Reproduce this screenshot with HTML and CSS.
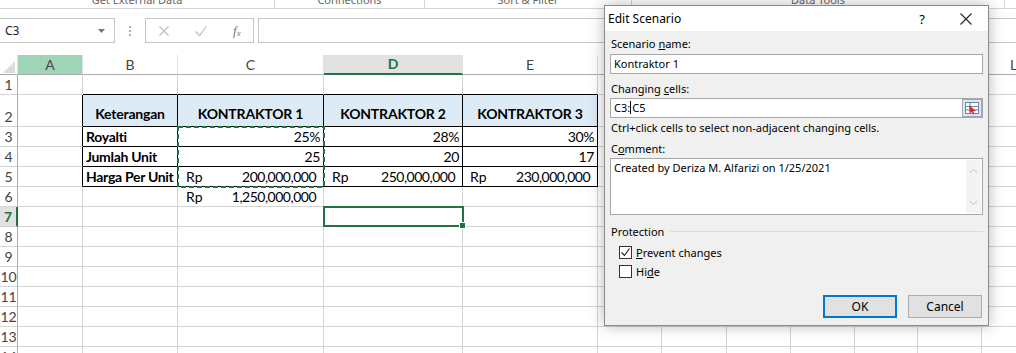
FILE: index.html
```html
<!DOCTYPE html>
<html>
<head>
<meta charset="utf-8">
<link rel="stylesheet" href="styles.css">
</head>
<body>
<div class="app">
  <div class="ribbon-groups">
    <div class="grp g1"><span>Get External Data</span></div>
    <div class="grp g2"><span>Connections</span></div>
    <div class="grp g3"><span>Sort &amp; Filter</span></div>
    <div class="grp g4"><span>Data Tools</span></div>
  </div>
  <div class="formula-bar">
    <div class="name-box"><span>C3</span><svg class="nb-arrow" width="7" height="4" viewBox="0 0 7 4"><path d="M0 0h7L3.5 4z" fill="#777"/></svg></div>
    <div class="fb-dots"><i></i><i></i><i></i></div>
    <div class="fx-box">
      <svg width="12" height="12" viewBox="0 0 12 12"><path d="M1.5 1.5l9 9M10.5 1.5l-9 9" stroke="#bdbdbd" stroke-width="1.2" fill="none"/></svg>
      <svg width="14" height="12" viewBox="0 0 14 12"><path d="M1.5 6.5l4 4L12.5 1.5" stroke="#bdbdbd" stroke-width="1.2" fill="none"/></svg>
      <span class="fx">f<sub>x</sub></span>
    </div>
    <div class="fb-input"></div>
  </div>
  <div class="sheet">
    <table class="grid">
      <colgroup>
        <col class="c-hdr"><col class="c-a"><col class="c-b"><col class="c-c"><col class="c-d"><col class="c-e"><col class="c-64"><col class="c-65"><col class="c-64"><col class="c-64"><col class="c-63"><col class="c-64"><col class="c-64">
      </colgroup>
      <tr class="r-hdr">
        <td class="corner"><svg width="12" height="12" viewBox="0 0 12 12"><path d="M12 0v12H0z" fill="#dcdcdc"/></svg></td>
        <td class="ch ch-a">A</td><td class="ch">B</td><td class="ch">C</td><td class="ch ch-sel">D</td><td class="ch">E</td><td class="ch"></td><td class="ch"></td><td class="ch"></td><td class="ch"></td><td class="ch"></td><td class="ch"></td><td class="ch">L</td>
      </tr>
      <tr>
        <td class="rh">1</td><td></td><td class="bb"></td><td class="bb"></td><td class="bb"></td><td class="bb"></td><td></td><td></td><td></td><td></td><td></td><td></td><td></td>
      </tr>
      <tr class="r-tall">
        <td class="rh">2</td><td class="br"></td>
        <td class="th bk">Keterangan</td><td class="th bk">KONTRAKTOR 1</td><td class="th bk">KONTRAKTOR 2</td><td class="th bk">KONTRAKTOR 3</td>
        <td></td><td></td><td></td><td></td><td></td><td></td><td></td>
      </tr>
      <tr>
        <td class="rh">3</td><td class="br"></td>
        <td class="lbl bk">Royalti</td><td class="num bk">25%</td><td class="num bk">28%</td><td class="num bk">30%</td>
        <td></td><td></td><td></td><td></td><td></td><td></td><td></td>
      </tr>
      <tr>
        <td class="rh">4</td><td class="br"></td>
        <td class="lbl bk">Jumlah Unit</td><td class="num bk">25</td><td class="num bk">20</td><td class="num bk">17</td>
        <td></td><td></td><td></td><td></td><td></td><td></td><td></td>
      </tr>
      <tr>
        <td class="rh">5</td><td class="br"></td>
        <td class="lbl bk">Harga Per Unit</td>
        <td class="bk"><div class="acct"><span>Rp</span><span class="digits">200,000,000</span></div></td>
        <td class="bk"><div class="acct"><span>Rp</span><span class="digits">250,000,000</span></div></td>
        <td class="bk"><div class="acct acct-e"><span>Rp</span><span class="digits">230,000,000</span></div></td>
        <td></td><td></td><td></td><td></td><td></td><td></td><td></td>
      </tr>
      <tr>
        <td class="rh">6</td><td></td><td></td>
        <td><div class="acct"><span>Rp</span><span class="digits">1,250,000,000</span></div></td>
        <td></td><td></td><td></td><td></td><td></td><td></td><td></td><td></td><td></td>
      </tr>
      <tr>
        <td class="rh rh-sel">7</td><td></td><td></td><td></td><td></td><td></td><td></td><td></td><td></td><td></td><td></td><td></td><td></td>
      </tr>
      <tr><td class="rh">8</td><td></td><td></td><td></td><td></td><td></td><td></td><td></td><td></td><td></td><td></td><td></td><td></td></tr>
      <tr><td class="rh">9</td><td></td><td></td><td></td><td></td><td></td><td></td><td></td><td></td><td></td><td></td><td></td><td></td></tr>
      <tr><td class="rh">10</td><td></td><td></td><td></td><td></td><td></td><td></td><td></td><td></td><td></td><td></td><td></td><td></td></tr>
      <tr><td class="rh">11</td><td></td><td></td><td></td><td></td><td></td><td></td><td></td><td></td><td></td><td></td><td></td><td></td></tr>
      <tr><td class="rh">12</td><td></td><td></td><td></td><td></td><td></td><td></td><td></td><td></td><td></td><td></td><td></td><td></td></tr>
      <tr><td class="rh">13</td><td></td><td></td><td></td><td></td><td></td><td></td><td></td><td></td><td></td><td></td><td></td><td></td></tr>
      <tr><td class="rh">14</td><td></td><td></td><td></td><td></td><td></td><td></td><td></td><td></td><td></td><td></td><td></td><td></td></tr>
    </table>
    <svg class="ants" width="148" height="62" viewBox="0 0 148 62"><rect x="1" y="1" width="146" height="60" fill="none" stroke="#217346" stroke-width="2" stroke-dasharray="5 3"/></svg>
    <div class="active-cell"><i class="handle"></i></div>
  </div>

  <div class="dialog">
    <div class="dlg-title">
      <span class="dlg-name">Edit Scenario</span>
      <span class="dlg-help">?</span>
      <svg class="dlg-close" width="12" height="12" viewBox="0 0 12 12"><path d="M0.5 0.5l11 11M11.5 0.5l-11 11" stroke="#222" stroke-width="1.1" fill="none"/></svg>
    </div>
    <div class="dlg-body">
      <div class="f-label l1">Scenario <u>n</u>ame:</div>
      <div class="f-input">Kontraktor 1</div>
      <div class="f-label l2">Changing <u>c</u>ells:</div>
      <div class="f-input ref-input"><span>C3:<i class="caret"></i>C5</span>
        <svg class="ref-btn" width="20" height="18" viewBox="0 0 20 18">
          <rect x="0.5" y="0.5" width="19" height="17" fill="#dfe6ee" stroke="#9aa9bb"/>
          <rect x="3.5" y="3.5" width="13" height="11" fill="#fff" stroke="#6d85a6"/>
          <path d="M3.5 7.5h13M3.5 11h13M8 3.5v11" stroke="#6d85a6" fill="none"/>
          <path d="M7 6l7 6-3 0.3 1.5 2.5-1.3 0.7-1.5-2.6L8 14z" fill="#d0312d"/>
        </svg>
      </div>
      <div class="f-help">Ctrl+click cells to select non-adjacent changing cells.</div>
      <div class="f-label l3">C<u>o</u>mment:</div>
      <div class="f-area">
        <span>Created by Deriza M. Alfarizi on 1/25/2021</span>
        <div class="vscroll">
          <svg width="9" height="6" viewBox="0 0 9 6"><path d="M1 5l3.5-3.5L8 5" stroke="#c2c2c2" fill="none"/></svg>
          <svg width="9" height="6" viewBox="0 0 9 6"><path d="M1 1l3.5 3.5L8 1" stroke="#c2c2c2" fill="none"/></svg>
        </div>
      </div>
      <div class="group-head"><span>Protection</span><i></i></div>
      <div class="check c1"><span class="box"><svg width="11" height="11" viewBox="0 0 11 11"><path d="M1.5 5.5l3 3 5-7" stroke="#222" stroke-width="1.1" fill="none"/></svg></span><span><u>P</u>revent changes</span></div>
      <div class="check c2"><span class="box"></span><span>Hi<u>d</u>e</span></div>
      <div class="buttons">
        <div class="btn btn-ok">OK</div>
        <div class="btn">Cancel</div>
      </div>
    </div>
  </div>
</div>
</body>
</html>
```

FILE: styles.css
```css
html, body {
  margin: 0;
  padding: 0;
  background: #fff;
}
.app {
  position: relative;
  width: 1016px;
  height: 353px;
  overflow: hidden;
  font-family: Lato, "Liberation Sans", sans-serif;
}

/* ribbon group captions (cut off at top) */
.ribbon-groups {
  display: flex;
  height: 8px;
  border-bottom: 1px solid #d4d4d4;
  overflow: hidden;
  font-family: "Noto Sans", sans-serif;
  font-size: 11px;
  color: #666;
}
.grp {
  position: relative;
  text-align: center;
  border-right: 1px solid #d4d4d4;
  height: 8px;
}
.grp span {
  display: block;
  line-height: 12px;
  margin-top: -6px;
}
.g1 { width: 274px; }
.g2 { width: 149px; }
.g3 { width: 206px; }
.g4 { width: 372px; }

/* formula bar */
.formula-bar {
  display: flex;
  align-items: flex-start;
  height: 46px;
  padding-top: 9px;
  box-sizing: border-box;
  font-family: "Noto Sans", sans-serif;
}
.name-box {
  width: 115px;
  height: 25px;
  box-sizing: border-box;
  border: 1px solid #c6c6c6;
  border-left: none;
  display: flex;
  align-items: center;
  justify-content: space-between;
  padding: 0 9px 0 5px;
  font-size: 12px;
  color: #222;
}
.fb-dots {
  width: 30px;
  height: 25px;
  display: flex;
  flex-direction: column;
  align-items: center;
  justify-content: center;
  gap: 2px;
}
.fb-dots i {
  display: block;
  width: 2px;
  height: 2px;
  background: #b0b0b0;
}
.fx-box {
  width: 109px;
  height: 25px;
  box-sizing: border-box;
  border: 1px solid #c6c6c6;
  display: flex;
  align-items: center;
  padding-left: 12px;
  gap: 24px;
}
.fx {
  font-family: "Liberation Serif", serif;
  font-style: italic;
  font-size: 13px;
  color: #777;
  margin-left: 1px;
}
.fx sub {
  font-size: 9px;
  vertical-align: -1px;
}
.fb-input {
  margin-left: 4px;
  flex: 1;
  height: 25px;
  box-sizing: border-box;
  border: 1px solid #c6c6c6;
  border-right: none;
}

/* sheet */
.sheet {
  position: relative;
}
.grid {
  table-layout: fixed;
  border-collapse: separate;
  border-spacing: 0;
  width: 1046px;
  font-size: 14px;
  color: #000;
}
.c-hdr { width: 18px; }
.c-a { width: 65px; }
.c-b { width: 95px; }
.c-c { width: 146px; }
.c-d { width: 139px; }
.c-e { width: 135px; }
.c-64 { width: 64px; }
.c-65 { width: 65px; }
.c-63 { width: 63px; }
.grid td {
  box-sizing: border-box;
  height: 20px;
  padding: 0;
  border-right: 1px solid #d4d4d4;
  border-bottom: 1px solid #d4d4d4;
  vertical-align: bottom;
  line-height: 18px;
  white-space: nowrap;
  overflow: hidden;
}
.grid .r-hdr td {
  height: 19px;
  vertical-align: middle;
  text-align: center;
  color: #444;
  font-size: 14px;
  border-right-color: #e0e0e0;
  border-bottom-color: #ababab;
}
.grid .r-hdr .corner {
  text-align: right;
  vertical-align: bottom;
  padding: 0 2px 1px 0;
  line-height: 0;
}
.grid .ch-a {
  background: #9fd5b7;
}
.grid .r-hdr .ch-sel {
  background: #e1e1e1;
  color: #217346;
  font-weight: bold;
  border-bottom: 2px solid #217346;
}
.grid .rh {
  text-align: center;
  color: #444;
  font-size: 14px;
  border-right-color: #ababab;
}
.grid .rh-sel {
  background: #e1e1e1;
  color: #217346;
  font-weight: bold;
  border-right: 2px solid #217346;
}
.grid .r-tall td {
  height: 32px;
}
.grid td.bb {
  border-bottom-color: #000;
}
.grid td.br {
  border-right-color: #000;
}
.grid td.bk {
  border-right-color: #000;
  border-bottom-color: #000;
}
.grid td.th {
  background: #ddebf7;
  font-weight: bold;
  text-align: center;
  padding-bottom: 3px;
  letter-spacing: -0.2px;
}
.grid td.lbl {
  font-weight: bold;
  padding-left: 3px;
  letter-spacing: -0.3px;
}
.grid td.num {
  text-align: right;
  padding-right: 3px;
  letter-spacing: -0.4px;
}
.acct {
  display: flex;
  justify-content: space-between;
  padding: 0 7px 0 8px;
}
.acct-e {
  padding-left: 7px;
}
.digits {
  letter-spacing: -0.5px;
}

/* overlays on the grid */
.ants {
  position: absolute;
  left: 177px;
  top: 71px;
}
.active-cell {
  position: absolute;
  left: 323px;
  top: 151px;
  width: 141px;
  height: 21px;
  box-sizing: border-box;
  border: 2px solid #217346;
}
.handle {
  position: absolute;
  right: -4px;
  bottom: -4px;
  width: 5px;
  height: 5px;
  background: #217346;
  border: 1px solid #fff;
}

/* dialog */
.dialog {
  position: absolute;
  left: 604px;
  top: 5px;
  width: 385px;
  height: 321px;
  box-sizing: border-box;
  border: 1px solid #8a8a8a;
  background: #f0f0f0;
  box-shadow: 0 0 14px rgba(0, 0, 0, 0.28);
  font-family: "Noto Sans", sans-serif;
  font-size: 11px;
  color: #000;
}
.dlg-title {
  height: 25px;
  background: #fff;
  display: flex;
  align-items: center;
  padding-left: 3px;
  font-size: 12px;
}
.dlg-name {
  flex: 1;
}
.dlg-help {
  font-size: 13px;
  margin-right: 35px;
}
.dlg-close {
  margin-right: 16px;
}
.dlg-body {
  padding: 0 5px;
  display: flex;
  flex-direction: column;
}
.f-label {
  height: 14px;
  line-height: 14px;
  padding-left: 1px;
}
.l1 { margin-top: 6px; }
.l2 { margin-top: 8px; }
.l3 { margin-top: 7px; }
.f-input {
  margin-top: 3px;
  height: 20px;
  box-sizing: border-box;
  border: 1px solid #a6a6a6;
  background: #fff;
  padding-left: 3px;
  line-height: 18px;
}
.ref-input {
  margin-top: 2px;
  display: flex;
  align-items: center;
  justify-content: space-between;
  padding-right: 0;
}
.caret {
  display: inline-block;
  width: 1px;
  height: 13px;
  background: #000;
  vertical-align: -2px;
  margin: 0 1px 0 0;
}
.ref-btn {
  display: block;
}
.f-help {
  margin-top: 3px;
  height: 14px;
  line-height: 14px;
  padding-left: 1px;
}
.f-area {
  margin-top: 2px;
  height: 57px;
  box-sizing: border-box;
  border: 1px solid #a6a6a6;
  background: #fff;
  display: flex;
  justify-content: space-between;
  padding-left: 3px;
  line-height: 18px;
}
.vscroll {
  width: 15px;
  margin: 1px 1px 1px 0;
  background: #f3f3f3;
  display: flex;
  flex-direction: column;
  justify-content: space-between;
  align-items: center;
  padding: 8px 0 7px;
}
.vscroll svg {
  display: block;
}
.group-head {
  margin-top: 9px;
  height: 14px;
  display: flex;
  align-items: center;
  gap: 6px;
  padding-left: 1px;
}
.group-head i {
  flex: 1;
  height: 1px;
  background: #dcdcdc;
}
.check {
  display: flex;
  align-items: center;
  height: 13px;
  padding-left: 9px;
  gap: 4px;
}
.c1 { margin-top: 8px; }
.c2 { margin-top: 6px; }
.box {
  width: 13px;
  height: 13px;
  box-sizing: border-box;
  border: 1px solid #333;
  background: #fff;
  display: flex;
  align-items: center;
  justify-content: center;
}
.box svg {
  display: block;
}
.buttons {
  margin-top: 17px;
  display: flex;
  justify-content: flex-end;
  gap: 11px;
  padding-right: 1px;
}
.btn {
  width: 74px;
  height: 23px;
  box-sizing: border-box;
  border: 1px solid #adadad;
  background: #e1e1e1;
  text-align: center;
  line-height: 21px;
  font-size: 12px;
}
.btn-ok {
  border: 2px solid #0078d7;
  line-height: 19px;
}
```
